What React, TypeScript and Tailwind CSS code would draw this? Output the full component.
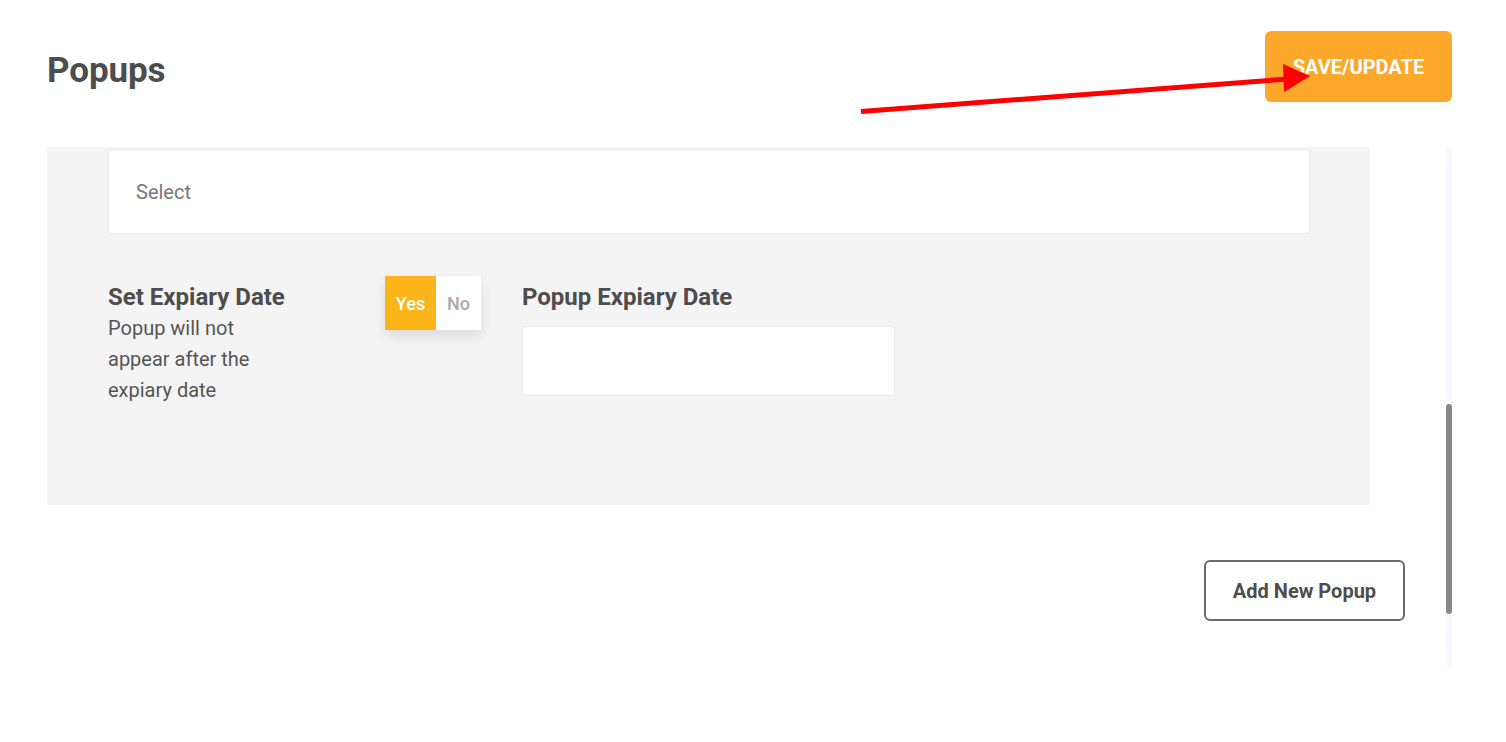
import React from "react";

export default function App() {
  return (
    <div
      className="relative w-[1506px] h-[742px] bg-white overflow-hidden text-[#4d4d4d]"
      style={{ fontFamily: "Roboto, 'Liberation Sans', sans-serif" }}
    >
      <div className="pl-[47px] pr-[54px] pt-[31px]">
        <div className="flex items-center justify-between">
          <h1 className="text-[35px] font-bold leading-none mt-[8px] tracking-[-0.1px]">Popups</h1>
          <button className="w-[187px] h-[71px] rounded-[6px] bg-[#fda82b] text-white text-[20px] font-bold flex items-start justify-center pt-[23px] leading-[26px]">
            SAVE/UPDATE
          </button>
        </div>

        <div className="flex mt-[45px]">
          <div className="w-[1358px]">
            <div className="w-[1323px] bg-[#f4f4f4] pt-[2px] pb-[99px]">
              <div className="ml-[61px] mr-[60px] h-[85px] bg-white border border-[#e9e9e9] rounded-[3px] flex items-center pl-[27px] text-[20px] text-[#777]">
                Select
              </div>
              <div className="flex mx-[61px] mt-[42px]">
                <div className="w-[277px]">
                  <div className="text-[24px] font-bold leading-[30px] mt-[6px]">Set Expiary Date</div>
                  <div className="text-[20px] leading-[31px] w-[190px] text-[#555] mt-[1px]">
                    Popup will not appear after the expiary date
                  </div>
                </div>
                <div className="w-[137px]">
                  <div className="flex w-[96px] h-[54px] shadow-[0_6px_12px_rgba(0,0,0,0.10)]">
                    <div className="w-[51px] bg-[#fbb51a] text-white text-[18px] font-medium flex items-center justify-center">
                      Yes
                    </div>
                    <div className="flex-1 bg-white text-[#aaa] text-[18px] font-medium flex items-center justify-center">
                      No
                    </div>
                  </div>
                </div>
                <div>
                  <div className="text-[24px] font-bold leading-[30px] mt-[6px]">Popup Expiary Date</div>
                  <div className="mt-[14px] w-[373px] h-[70px] bg-white border border-[#e9e9e9] rounded-[3px]" />
                </div>
              </div>
            </div>
            <div className="flex justify-end mt-[55px]">
              <button className="w-[201px] h-[61px] border-2 border-[#6b6b6b] rounded-[6px] text-[20px] font-bold text-[#4d4d4d]">
                Add New Popup
              </button>
            </div>
          </div>
          <div className="ml-auto w-[6px] h-[521px] bg-[#f8f9fc] relative">
            <div className="absolute left-0 top-[257px] w-[6px] h-[210px] rounded-full bg-[#888]" />
          </div>
        </div>
      </div>

      <svg className="absolute left-0 top-0 pointer-events-none" width="1506" height="742">
        <line x1="861" y1="111.5" x2="1287" y2="79" stroke="#ff0000" strokeWidth="5" />
        <polygon points="1283,64 1284,92 1310,76" fill="#ff0000" />
      </svg>
    </div>
  );
}
